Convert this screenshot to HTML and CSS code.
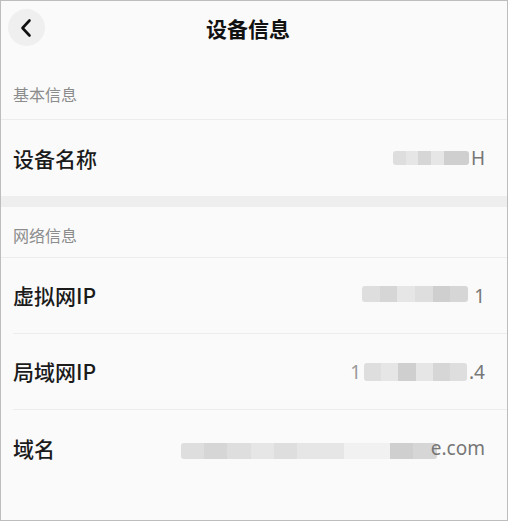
FILE: index.html
```html
<!DOCTYPE html>
<html lang="zh-CN">
<head>
<meta charset="utf-8">
<link rel="stylesheet" href="styles.css">
</head>
<body>
<div class="screen">
  <header class="topbar">
    <button class="back" aria-label="返回">
      <svg width="14" height="20" viewBox="0 0 14 20"><path d="M10.5 2.5 L3.5 10 L10.5 17.5" fill="none" stroke="#111" stroke-width="2.6" stroke-linecap="round" stroke-linejoin="round"/></svg>
    </button>
    <h1 class="title">设备信息</h1>
  </header>

  <div class="section-title first">基本信息</div>
  <div class="row">
    <span class="label">设备名称</span>
    <span class="value">
      <span class="mosaic m1"><i class="c2"></i><i class="c1"></i><i class="c3"></i><i class="c1"></i><i class="c4"></i><i class="c4"></i></span><span class="tail">H</span>
    </span>
  </div>

  <div class="band"></div>

  <div class="section-title">网络信息</div>
  <div class="row">
    <span class="label">虚拟网IP</span>
    <span class="value">
      <span class="mosaic m2"><i class="c2"></i><i class="c3"></i><i class="c1"></i><i class="c2"></i><i class="c4"></i><i class="c3"></i></span><span class="tail">1</span>
    </span>
  </div>
  <div class="row">
    <span class="label">局域网IP</span>
    <span class="value">
      <span class="head">1</span><span class="mosaic m3"><i class="c2"></i><i class="c1"></i><i class="c4"></i><i class="c1"></i><i class="c3"></i><i class="c2"></i></span><span class="tail">.4</span>
    </span>
  </div>
  <div class="row last">
    <span class="label">域名</span>
    <span class="value">
      <span class="mosaic m4"><i class="c2"></i><i class="c3"></i><i class="c2"></i><i class="c1"></i><i class="c2"></i><i class="c1"></i><i class="c1"></i><i class="c0"></i><i class="c0"></i><i class="c4"></i><i class="c3"></i></span><span class="tail">e.com</span>
    </span>
  </div>
</div>
</body>
</html>
```

FILE: styles.css
```css
html, body {
  margin: 0;
  padding: 0;
  background: #fafafa;
}

.screen {
  box-sizing: border-box;
  width: 508px;
  height: 521px;
  border: 1px solid #bdbdbd;
  background: #fafafa;
  overflow: hidden;
  font-family: "Noto Sans CJK SC", "Noto Sans", sans-serif;
}

.topbar {
  position: relative;
  height: 55px;
  display: flex;
  align-items: center;
  justify-content: center;
}

.back {
  position: absolute;
  left: 7px;
  top: 8px;
  width: 37px;
  height: 37px;
  border-radius: 50%;
  border: none;
  padding: 0;
  background: #efefef;
  display: flex;
  align-items: center;
  justify-content: center;
}

.back svg {
  margin-left: -2px;
}

.title {
  margin: -2px 12px 0 0;
  font-size: 21px;
  font-weight: 700;
  color: #111;
  line-height: 28px;
}

.section-title {
  font-size: 16px;
  color: #8c8c8c;
  line-height: 20px;
  padding: 18px 12px 12px;
  border-bottom: 1px solid #ececec;
}

.section-title.first {
  padding-top: 28px;
  padding-bottom: 15px;
}

.row {
  height: 76px;
  margin-left: 12px;
  padding-right: 22px;
  display: flex;
  align-items: center;
  justify-content: space-between;
  border-bottom: 1px solid #ececec;
  box-sizing: border-box;
}

.row.last,
.first + .row {
  border-bottom: none;
}

.label {
  font-size: 21px;
  color: #1b1b1b;
  font-weight: 500;
  line-height: 28px;
  padding-bottom: 1px;
}

.value {
  display: flex;
  align-items: center;
  font-family: "Noto Sans", "Open Sans", sans-serif;
  font-size: 19px;
  color: #777;
  line-height: 24px;
}

.band {
  height: 11px;
  background: #eeeeee;
}

.mosaic {
  display: flex;
  height: 14px;
  border-radius: 3px;
  overflow: hidden;
}

.mosaic i {
  display: block;
  flex: 1;
  height: 100%;
}

.c0 { background: #f1f1f1; }
.c1 { background: #e6e6e6; }
.c2 { background: #dedede; }
.c3 { background: #d6d6d6; }
.c4 { background: #cfcfcf; }

.m1 { width: 76px; margin-right: 2px; }
.m2 { width: 106px; height: 16px; margin-right: 6px; margin-top: -4px; }
.m3 { width: 103px; height: 18px; margin-left: 3px; margin-right: 2px; }
.m4 { width: 256px; height: 16px; margin-top: 6px; margin-right: -6px; }

.head {
  color: #999;
}
```
